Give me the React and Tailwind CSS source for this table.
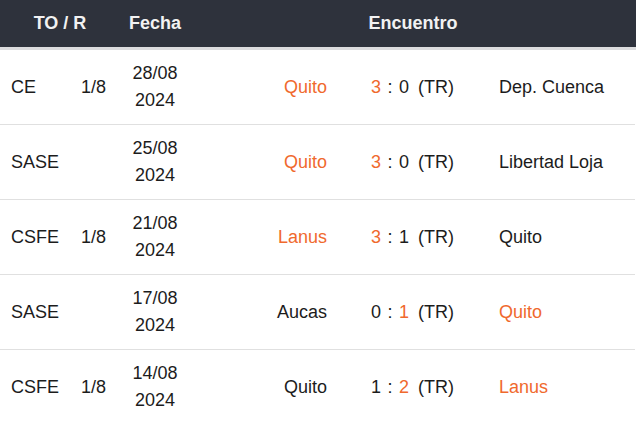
const matches = [
  { to: "CE", r: "1/8", date: "28/08", year: "2024", home: "Quito", away: "Dep. Cuenca", hs: 3, as: 0, win: "home" },
  { to: "SASE", r: "", date: "25/08", year: "2024", home: "Quito", away: "Libertad Loja", hs: 3, as: 0, win: "home" },
  { to: "CSFE", r: "1/8", date: "21/08", year: "2024", home: "Lanus", away: "Quito", hs: 3, as: 1, win: "home" },
  { to: "SASE", r: "", date: "17/08", year: "2024", home: "Aucas", away: "Quito", hs: 0, as: 1, win: "away" },
  { to: "CSFE", r: "1/8", date: "14/08", year: "2024", home: "Quito", away: "Lanus", hs: 1, as: 2, win: "away" },
];

const orange = "text-[#f0692d]";
const dark = "text-[#1c1c1c]";

export default function App() {
  return (
    <div className="w-[636px] h-[423px] overflow-hidden bg-white font-['Liberation_Sans',Arial,sans-serif] text-[18px]">
      <div className="flex items-center h-[47px] bg-[#2e323c] text-[#f2f2f2] font-bold border-b-[3px] border-[#dcdcde] box-content">
        <div className="w-[120px] text-center">TO / R</div>
        <div className="w-[70px] text-center">Fecha</div>
        <div className="flex-1 text-center">Encuentro</div>
      </div>
      {matches.map((m, i) => (
        <div key={i} className={`flex items-center h-[75px] border-b border-[#e0e0e0] w-[635px] ${dark}`}>
          <div className="w-[81px] pl-[11px]">{m.to}</div>
          <div className="w-[39px]">{m.r}</div>
          <div className="w-[70px] text-center leading-[27px]">
            <div>{m.date}</div>
            <div>{m.year}</div>
          </div>
          <div className={`w-[137px] text-right ${m.win === "home" ? orange : dark}`}>{m.home}</div>
          <div className="w-[172px] pl-[44px] whitespace-pre">
            <span className={m.win === "home" ? orange : dark}>{m.hs}</span>
            <span className="px-[1.5px]"> : </span>
            <span className={m.win === "away" ? orange : dark}>{m.as}</span>
            <span className="pl-[4px]"> (TR)</span>
          </div>
          <div className={`flex-1 ${m.win === "away" ? orange : dark}`}>{m.away}</div>
        </div>
      ))}
    </div>
  );
}
